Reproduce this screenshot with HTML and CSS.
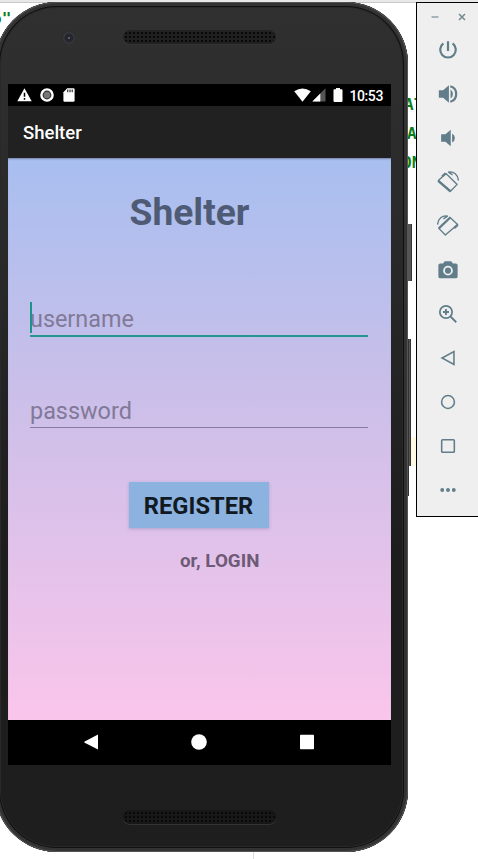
FILE: index.html
```html
<!DOCTYPE html>
<html lang="en">
<head>
<meta charset="utf-8">
<title>Shelter</title>
<link rel="stylesheet" href="styles.css">
</head>
<body>
<main class="desktop">
  <div class="editor-edge"></div>
  <span class="code code-quote">o"</span>
  <span class="code code-one">AT</span>
  <span class="code code-two">A</span>
  <span class="code code-three">ON</span>
  <div class="code-line"></div>
  <div class="editor-rule"></div>
  <div class="side-button power"></div>
  <div class="side-button volume"></div>
  <div class="side-button edge"></div>

  <section class="phone">
    <header class="bezel bezel-top">
      <span class="camera"></span>
      <span class="speaker"></span>
    </header>
    <div class="screen">
      <div class="status">
        <div class="status-left">
          <svg width="15" height="14" viewBox="0 0 15 14"><path d="M7.5 .3 14.7 13.2H.3z" fill="#fff"/><path d="M7.5 4.8v4M7.5 10v1.7" stroke="#000" stroke-width="1.5"/></svg>
          <svg width="14" height="14" viewBox="0 0 14 14"><circle cx="7" cy="7" r="5.6" fill="#333" stroke="#fff" stroke-width="2.4"/><circle cx="7" cy="7" r="3.2" fill="#777"/></svg>
          <svg width="12" height="14" viewBox="0 0 12 14"><path d="M4.2.3h6.2q1.2 0 1.2 1.2v11q0 1.2-1.2 1.2H1.6Q.4 13.700.4 12.500V4.300z" fill="#fff"/><path d="M4.800 1.500v2.700M7 1.500v2.700M9.200 1.500v2.700" stroke="#000"/></svg>
        </div>
        <div class="status-right">
          <svg width="17" height="14" viewBox="0 0 17 14"><path d="M.2 3.200Q8.500-2.400 16.800 3.200L8.500 13.800z" fill="#fff"/></svg>
          <svg class="signal" width="14" height="14" viewBox="0 0 14 14"><path d="M13.500.3v13.200H.3z" fill="#555"/><path d="M8.300 5.500v8H.3z" fill="#fff"/></svg>
          <svg class="battery" width="10" height="14" viewBox="0 0 10 14"><path d="M3 0h4v1.300h1.700q.8 0 .8.800v11q0 .8-.8.800H1.300q-.8 0-.8-.8v-11q0-.8.8-.8H3z" fill="#fff"/></svg>
          <span class="clock">10:53</span>
        </div>
      </div>
      <div class="app-bar">Shelter</div>
      <div class="content">
        <h1>Shelter</h1>
        <div class="field focused"><span>username</span></div>
        <div class="field"><span>password</span></div>
        <button class="register">REGISTER</button>
        <p class="login">or, LOGIN</p>
      </div>
      <nav class="nav">
        <svg width="16" height="16" viewBox="0 0 16 16"><path d="M15 .6v15L1.700 8.800q-1-.7 0-1.400z" fill="#fff"/></svg>
        <svg width="16" height="16" viewBox="0 0 16 16"><circle cx="8" cy="8" r="7.800" fill="#fff"/></svg>
        <svg width="16" height="16" viewBox="0 0 16 16"><rect x="1" y=".7" width="14" height="14.500" rx=".8" fill="#fff"/></svg>
      </nav>
    </div>
    <footer class="bezel bezel-bottom"><span class="speaker"></span></footer>
  </section>

  <aside class="toolbar">
    <div class="window-controls">
      <svg width="8" height="8" viewBox="0 0 8 8"><path d="M.5 4h7" stroke="#90a0a8" stroke-width="1.500"/></svg>
      <svg width="8" height="8" viewBox="0 0 8 8"><path d="m1 1 6 6M7 1 1 7" stroke="#748990" stroke-width="1.500"/></svg>
    </div>
    <div class="tool"><svg viewBox="0 0 24 24"><path d="M12 2.500v10.500M7 4.800a8.500 8.500 0 1 0 10 0" fill="none" stroke="#617d8a" stroke-width="2.400"/></svg></div>
    <div class="tool"><svg viewBox="0 0 24 24"><path d="M2 8v8h4.700l6.300 5.500V2.500L6.700 8zM14.800 7v10q2.600-1.800 2.600-5t-2.600-5z" fill="#617d8a"/><path d="M14.500 3.600a8.700 8.700 0 0 1 0 16.800" fill="none" stroke="#617d8a" stroke-width="2.400"/></svg></div>
    <div class="tool"><svg viewBox="0 0 24 24"><path d="M4.500 8v8h4.700l5.800 5V3L9.200 8zM16.500 7v10q3-1.800 3-5t-3-5z" fill="#617d8a"/></svg></div>
    <div class="tool"><svg viewBox="0 0 24 24"><path d="M9.800 2.800 22 14.600 14.900 21.800 1.500 10.300z" fill="none" stroke="#617d8a" stroke-width="1.500" stroke-linejoin="round"/><path d="M1.300 10.800 14.900 22.500M9.300 2.500 5.500 6" fill="none" stroke="#617d8a" stroke-width="2.500"/><path d="M12 1.200C18.500-.2 23 4.500 23.400 10.500M12.500 1.200l4.500 3" fill="none" stroke="#617d8a" stroke-width="1.400"/></svg></div>
    <div class="tool"><svg viewBox="0 0 24 24"><g transform="matrix(-1 0 0 1 24 0)"><path d="M9.800 2.800 22 14.600 14.900 21.800 1.500 10.300z" fill="none" stroke="#617d8a" stroke-width="1.500" stroke-linejoin="round"/><path d="M9.300 2.500 22 14.600M1.300 10.800l4 3.500" fill="none" stroke="#617d8a" stroke-width="2.300"/><path d="M12 1.200C18.500-.2 23 4.500 23.400 10.500M12.500 1.200l4.500 3" fill="none" stroke="#617d8a" stroke-width="1.400"/></g></svg></div>
    <div class="tool"><svg viewBox="0 0 24 24"><path d="M8.500 2.500h7l2 2.300h3q2 0 2 2V19q0 2-2 2h-17q-2 0-2-2V6.800q0-2 2-2h3z" fill="#617d8a"/><circle cx="12" cy="12.700" r="4.300" fill="none" stroke="#efefef" stroke-width="2"/></svg></div>
    <div class="tool"><svg viewBox="0 0 24 24"><circle cx="9.800" cy="9.800" r="6.700" fill="none" stroke="#617d8a" stroke-width="1.900"/><path d="M9.800 6.500v6.600M6.500 9.800h6.600M15 15l6 6" fill="none" stroke="#617d8a" stroke-width="2"/></svg></div>
    <div class="tool"><svg viewBox="0 0 24 24"><path d="M18.500 5v14L5.500 12z" fill="none" stroke="#617d8a" stroke-width="1.700"/></svg></div>
    <div class="tool"><svg viewBox="0 0 24 24"><circle cx="12" cy="12" r="7" fill="none" stroke="#617d8a" stroke-width="1.700"/></svg></div>
    <div class="tool"><svg viewBox="0 0 24 24"><rect x="5.100" y="5.100" width="13.800" height="13.800" rx="1" fill="none" stroke="#617d8a" stroke-width="1.700"/></svg></div>
    <div class="tool"><svg viewBox="0 0 24 24"><g fill="#617d8a"><circle cx="5.700" cy="12" r="2.100"/><circle cx="12" cy="12" r="2.100"/><circle cx="18.300" cy="12" r="2.100"/></g></svg></div>
  </aside>
</main>
</body>
</html>
```
FILE: styles.css
```css
* { box-sizing: border-box; }
body { margin: 0; background: #fff; font-family: Roboto, sans-serif; }
svg { display: block; flex: none; }
.desktop { position: relative; width: 478px; height: 859px; overflow: hidden; background: #fff; }
.editor-edge { height: 3px; background: #e8e8e8; border-bottom: 1px solid #c8c8c8; }

.code { position: absolute; color: #087d19; font: bold 16px/18px "DejaVu Sans Mono", monospace; }
.code-quote { left: -8px; top: 10px; }
.code-one { left: 404px; top: 96px; }
.code-two { left: 407px; top: 125px; }
.code-three { left: 402px; top: 154px; }
.code-line { position: absolute; left: 408px; top: 437px; width: 8px; height: 29px; background: #fffae3; }
.editor-rule { position: absolute; left: 253px; top: 852px; width: 1px; height: 7px; background: #ddd; }

.side-button { position: absolute; left: 406px; background: #555; border-right: 1px solid #333; }
.power { top: 224px; width: 6px; height: 57px; }
.volume { top: 339px; width: 5px; height: 127px; }
.edge { top: 339px; width: 3px; height: 157px; }

.phone {
  position: absolute; left: -5px; top: 2px; width: 413px; height: 850px;
  padding: 0 17px 0 13px; border-radius: 62px;
  background: linear-gradient(#303030 0, #292929 30%, #1d1d1e 65%, #1e1e1f 100%);
  box-shadow: inset 0 0 0 1px #555, inset 0 0 0 4px #333, inset 0 0 0 5px #101010, inset 0 0 0 6px #292929;
}
.bezel { display: flex; }
.bezel-top { height: 82px; padding: 28px 0 0 53px; gap: 47px; }
.bezel-bottom { height: 87px; justify-content: center; padding: 45px 0 0; }
.camera { width: 15px; height: 15px; border-radius: 50%; background: radial-gradient(circle at 8px 8px, #55586a 0 1px, #25252d 1.500px 4px, #39393d 5px, #2c2c2f 7px); }
.speaker {
  width: 153px; height: 14px; border-radius: 7px; border: 1px solid #222;
  background: radial-gradient(circle, #080808 0 1px, transparent 1.3px) 0 0 / 4px 4px, #202020;
  box-shadow: 0 1px 0 #333;
}
.bezel-bottom .speaker { background-color: #181818; border-color: #161616; }

.screen { width: 383px; height: 681px; display: flex; flex-direction: column; }
.status { height: 22px; background: #000; color: #fff; display: flex; justify-content: space-between; align-items: center; padding: 0 8px 0 9px; }
.status-left { display: flex; gap: 8px; }
.status-left svg:last-child { margin-left: 1px; }
.status-right { display: flex; align-items: center; }
.signal { margin-left: 1px; }
.battery { margin: 0 6px 0 7px; }
.clock { font-size: 14px; font-weight: 500; line-height: 22px; letter-spacing: -.4px; padding-top: 1px; }
.app-bar { height: 52px; padding-left: 15px; background: #212121; color: #fff; font-size: 18.500px; font-weight: 500; line-height: 55px; }
.content {
  height: 562px; padding: 34px 23px 0 22px; display: flex; flex-direction: column;
  background: linear-gradient(#a8bff0, #c9bfe9 40%, #fac5eb);
  box-shadow: inset 0 2px 2px -1px #7783a8;
}
h1 { align-self: center; margin: 0 19px 0 0; height: 42px; color: #4f5b74; font-size: 37.200px; font-weight: 700; line-height: 41px; }
.field { border-bottom: 1px solid #857d9e; height: 33px; color: #817998; font-size: 23.400px; line-height: 32px; }
.field + .field { margin-top: 58px; }
.focused { height: 35px; margin-top: 68px; border-bottom: 2px solid #26958f; }
.focused span { display: block; height: 31px; border-left: 2px solid #19958a; text-indent: -2px; line-height: 34px; }
.register {
  align-self: center; width: 140px; height: 46px; margin: 54px 1px 0 0; padding: 0; border: 0;
  background: #8cb2df; color: #111923; font: 700 23.700px/49px Roboto, sans-serif; box-shadow: 0 1px 3px #7778a070;
}
.login { margin: 21px 0 0 150px; color: #6d5a76; font-size: 18.800px; font-weight: 700; line-height: 24px; }
.nav { height: 45px; background: #000; display: flex; align-items: center; justify-content: center; gap: 92px; padding: 0 2px 1px 0; }

.toolbar { position: absolute; left: 416px; top: 2px; width: 64px; height: 515px; background: #efefef; border: 1px solid #000; }
.window-controls { height: 25px; display: flex; gap: 19px; padding: 10px 0 0 14px; }
.tool { height: 44px; display: flex; align-items: center; justify-content: center; }
.tool svg { width: 22px; height: 22px; margin: -1px 0 0 -1px; }
```
